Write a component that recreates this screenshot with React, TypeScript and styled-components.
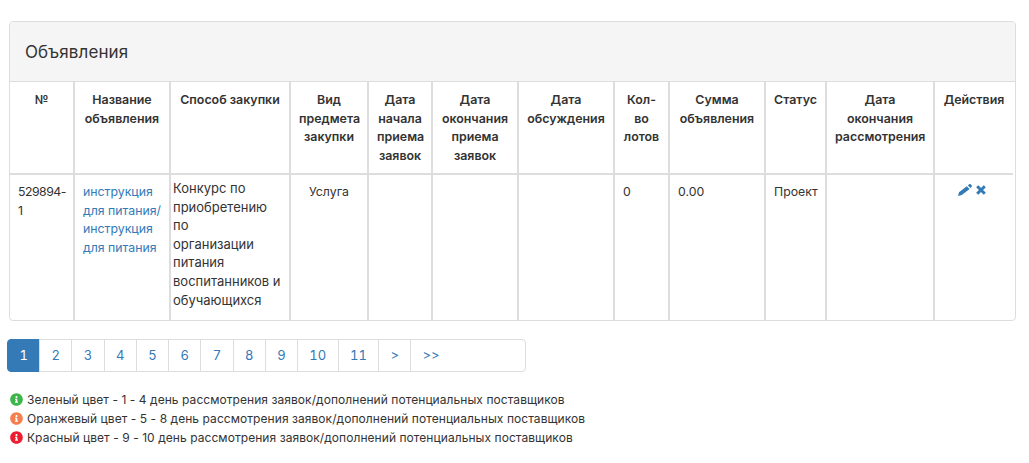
import React from 'react';
import styled, { createGlobalStyle } from 'styled-components';
import { FaInfoCircle } from 'react-icons/fa';

const GlobalStyle = createGlobalStyle`
  html, body {
    margin: 0;
    padding: 0;
    background: #fff;
    font-family: Inter, "Liberation Sans", sans-serif;
    color: #333;
  }
  * {
    box-sizing: border-box;
  }
`;

const Page = styled.div`
  width: 1029px;
  height: 463px;
  overflow: hidden;
  padding: 21px 13px 0 7px;
`;

const Panel = styled.div`
  margin-left: 2px;
  border: 1px solid #ddd;
  border-radius: 4px;
  overflow: hidden;
`;

const PanelHeading = styled.div`
  height: 60px;
  padding: 0 15px;
  display: flex;
  align-items: center;
  background: #f5f5f5;
  border-bottom: 1px solid #ddd;
  font-size: 17px;
  letter-spacing: 0.1px;
  line-height: 18px;
`;

const Table = styled.table`
  width: 1003px;
  table-layout: fixed;
  border-collapse: collapse;
  font-size: 12.3px;
  line-height: 18.6px;
`;

const HeadCell = styled.th`
  height: 92px;
  padding: 9px 8px 0;
  vertical-align: top;
  text-align: center;
  font-weight: 600;
  font-size: 12.4px;
  color: #333;
  border: 2px solid #ddd;
  border-top: 0;
  &:first-child {
    border-left: 0;
  }
  &:last-child {
    border-right: 0;
  }
`;

const Cell = styled.td<{ $center?: boolean; $flush?: boolean; $tight?: boolean }>`
  height: 146px;
  padding: ${p => (p.$flush ? '4px 8px 4px 2px' : '8px')};
  vertical-align: top;
  text-align: ${p => (p.$center ? 'center' : 'left')};
  font-size: ${p => (p.$flush ? '13px' : 'inherit')};
  letter-spacing: ${p => (p.$tight ? '-0.5px' : 'normal')};
  border-left: 2px solid #ddd;
  border-right: 2px solid #ddd;
  &:first-child {
    border-left: 0;
  }
  &:last-child {
    border-right: 0;
  }
`;

const RowLink = styled.a`
  color: #337ab7;
  text-decoration: none;
`;

const ActionIcons = styled.div`
  display: flex;
  justify-content: center;
  align-items: center;
  gap: 4px;
  height: 14px;
  padding-right: 4px;
  color: #337ab7;
`;

const Pagination = styled.ul`
  display: flex;
  width: 519px;
  height: 33px;
  margin: 18px 0 0;
  padding: 0;
  list-style: none;
  font-size: 13px;
  font-variant-numeric: tabular-nums;
`;

const PageItem = styled.li<{ $active?: boolean; $wide?: boolean }>`
  flex: ${p => (p.$wide ? '1' : 'none')};
  margin-left: -1px;
  padding: 0 11.4px;
  line-height: 31px;
  color: ${p => (p.$active ? '#fff' : '#337ab7')};
  background: ${p => (p.$active ? '#337ab7' : '#fff')};
  border: 1px solid ${p => (p.$active ? '#337ab7' : '#ddd')};
  &:first-child {
    margin-left: 0;
    border-radius: 4px 0 0 4px;
  }
  &:last-child {
    border-radius: 0 4px 4px 0;
  }
`;

const Legend = styled.div`
  margin: 18px 0 0 3px;
  font-size: 12px;
  letter-spacing: 0.06px;
  line-height: 19px;
`;

const LegendRow = styled.div`
  display: flex;
  align-items: center;
  gap: 4px;
  white-space: nowrap;
`;

const Dot = styled(FaInfoCircle)<{ $color: string }>`
  color: ${p => p.$color};
  font-size: 13px;
  flex: none;
`;

const PencilIcon = () => (
  <svg width="14" height="12" viewBox="0 0 14 12" fill="currentColor">
    <path d="M0 12 L1 8.2 L8.8 2.2 L11.6 4.9 L3.8 10.9 Z" />
    <path d="M9.8 1.4 L11.2 0.3 C11.8 -0.1 12.4 0 12.9 0.5 L13.6 1.2 C14.1 1.8 14 2.5 13.5 2.9 L12.6 3.9 Z" />
  </svg>
);

const CrossIcon = () => (
  <svg width="10" height="10" viewBox="0 0 10 10" stroke="currentColor" strokeWidth="3" fill="none">
    <path d="M1.2 1.2 L8.8 8.8 M8.8 1.2 L1.2 8.8" />
  </svg>
);

const columns = [64, 96, 120, 78, 64, 86, 96, 55, 96, 61, 108, 79];

const headers = [
  '№',
  'Название объявления',
  'Способ закупки',
  'Вид предмета закупки',
  'Дата начала приема заявок',
  'Дата окончания приема заявок',
  'Дата обсуждения',
  'Кол-во лотов',
  'Сумма объявления',
  'Статус',
  'Дата окончания рассмотрения',
  'Действия',
];

const pages = ['2', '3', '4', '5', '6', '7', '8', '9', '10', '11', '>'];

const legend = [
  { color: '#3cb54a', text: 'Зеленый цвет - 1 - 4 день рассмотрения заявок/дополнений потенциальных поставщиков' },
  { color: '#f47f4f', text: 'Оранжевый цвет - 5 - 8 день рассмотрения заявок/дополнений потенциальных поставщиков' },
  { color: '#ee1c2e', text: 'Красный цвет - 9 - 10 день рассмотрения заявок/дополнений потенциальных поставщиков' },
];

export default function App() {
  return (
    <Page>
      <GlobalStyle />
      <Panel>
        <PanelHeading>Объявления</PanelHeading>
        <Table>
          <colgroup>
            {columns.map((w, i) => (
              <col key={i} width={w} />
            ))}
          </colgroup>
          <thead>
            <tr>
              {headers.map(h => (
                <HeadCell key={h}>{h}</HeadCell>
              ))}
            </tr>
          </thead>
          <tbody>
            <tr>
              <Cell $tight>529894-1</Cell>
              <Cell>
                <RowLink href="#">инструкция для питания/ инструкция для питания</RowLink>
              </Cell>
              <Cell $flush>
                Конкурс по приобретению по
                <br />
                организации питания воспитанников и обучающихся
              </Cell>
              <Cell $center>Услуга</Cell>
              <Cell />
              <Cell />
              <Cell />
              <Cell>0</Cell>
              <Cell>0.00</Cell>
              <Cell>Проект</Cell>
              <Cell />
              <Cell>
                <ActionIcons>
                  <PencilIcon />
                  <CrossIcon />
                </ActionIcons>
              </Cell>
            </tr>
          </tbody>
        </Table>
      </Panel>
      <Pagination>
        <PageItem $active>1</PageItem>
        {pages.map(p => (
          <PageItem key={p}>{p}</PageItem>
        ))}
        <PageItem $wide>&gt;&gt;</PageItem>
      </Pagination>
      <Legend>
        {legend.map(l => (
          <LegendRow key={l.color}>
            <Dot $color={l.color} />
            {l.text}
          </LegendRow>
        ))}
      </Legend>
    </Page>
  );
}
